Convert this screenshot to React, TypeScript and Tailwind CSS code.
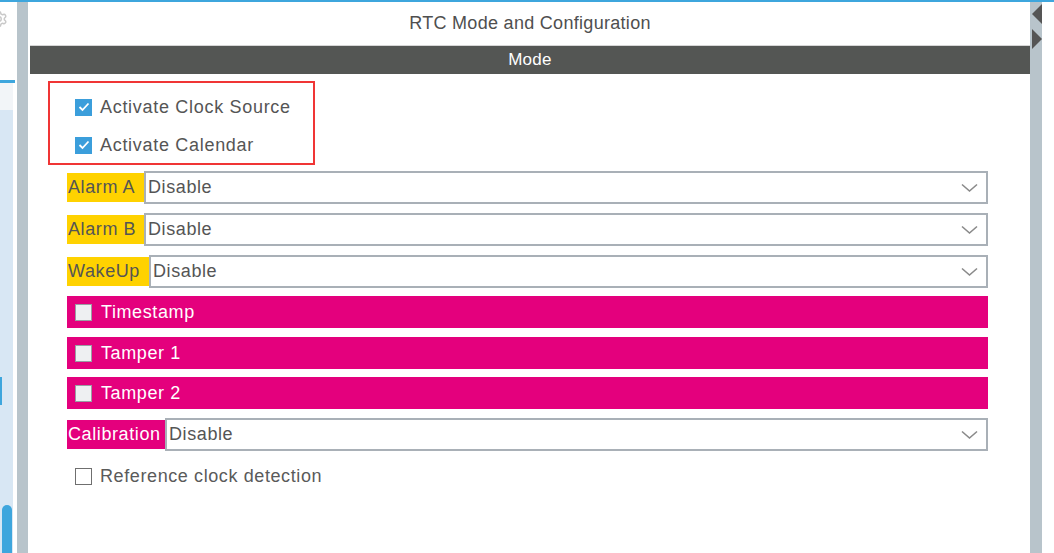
import React from "react";
import { Settings } from "lucide-react";

const font = { fontFamily: '"Liberation Sans", Arial, sans-serif' };

function Chevron() {
  return (
    <svg width="17" height="10" viewBox="0 0 17 10" className="mr-[8px] shrink-0">
      <polyline points="1,1.5 8.5,8 16,1.5" fill="none" stroke="#8a8a8a" strokeWidth="1.6" />
    </svg>
  );
}

function SelectRow({ label, labelW, bg, textColor, mt }: { label: string; labelW: string; bg: string; textColor: string; mt: string }) {
  return (
    <div className={`flex items-center h-[33px] ${mt}`}>
      <div className={`h-[29px] ${labelW} ${bg} ${textColor} pl-[1px] flex items-center text-[18px] tracking-[0.6px] shrink-0 whitespace-nowrap`}>
        {label}
      </div>
      <div className="flex-1 h-[33px] border-2 border-[#a9b0b7] bg-white flex items-center justify-between">
        <span className="pl-[2px] text-[18px] tracking-[0.6px] text-[#555]">Disable</span>
        <Chevron />
      </div>
    </div>
  );
}

function PinkRow({ label, mt }: { label: string; mt: string }) {
  return (
    <div className={`flex items-center h-[32px] bg-[#e4007d] pl-[8px] ${mt}`}>
      <div className="w-[17px] h-[17px] bg-[#eef0f2] border-[1.5px] border-[#9a9ea3] shrink-0" />
      <span className="ml-[9px] text-white text-[18px] tracking-[0.6px]">{label}</span>
    </div>
  );
}

function Checked() {
  return (
    <div className="w-[17px] h-[17px] bg-[#3b9edb] flex items-center justify-center shrink-0">
      <svg width="12" height="10" viewBox="0 0 12 10">
        <polyline points="1.5,5 4.5,8 10.5,1.5" fill="none" stroke="white" strokeWidth="1.8" />
      </svg>
    </div>
  );
}

export default function App() {
  return (
    <div className="w-[1054px] h-[553px] overflow-hidden bg-white flex flex-col" style={font}>
      <div className="h-[2px] bg-[#3ea6dd] shrink-0" />
      <div className="flex flex-1 min-h-0">
        {/* left strip */}
        <div className="w-[17px] flex flex-col shrink-0 overflow-hidden">
          <div className="h-[78px] bg-white overflow-hidden">
            <Settings size={18} color="#c9c9c9" strokeWidth={2} className="ml-[-10px] mt-[8px]" />
          </div>
          <div className="h-[3px] w-[15px] bg-[#3ea6dd]" />
          <div className="flex-1 w-[13px] flex flex-col">
            <div className="h-[27px] bg-[#f2f5f8]" />
            <div className="flex-1 bg-[#d8e7f4] flex flex-col">
              <div className="h-[267px]" />
              <div className="h-[28px] w-[2px] bg-[#3ea6dd]" />
              <div className="flex-1" />
              <div className="h-[48px] ml-[2px] w-[10px] rounded-t-[5px] bg-[#3ea6dd]" />
            </div>
          </div>
        </div>
        <div className="w-[11px] bg-[#b8c4cb] shrink-0" />
        <div className="w-[2px] bg-white shrink-0" />
        {/* main */}
        <div className="w-[1000px] flex flex-col shrink-0">
          <div className="h-[43px] flex items-center justify-center text-[18px] tracking-[0.3px] text-[#4f4f4f]">
            RTC Mode and Configuration
          </div>
          <div className="h-[1px] bg-[#d6d6d6]" />
          <div className="h-[28px] bg-[#545654] flex items-center justify-center text-white text-[17px] tracking-[0.3px]">
            Mode
          </div>
          <div className="ml-[18px] mt-[7px] w-[267px] h-[84px] border-2 border-[#f03535] flex flex-col pt-[4px] pl-[25px]">
            <div className="h-[40px] shrink-0 flex items-center">
              <Checked />
              <span className="ml-[8px] text-[18px] tracking-[0.7px] text-[#555]">Activate Clock Source</span>
            </div>
            <div className="h-[36px] shrink-0 flex items-center">
              <Checked />
              <span className="ml-[8px] text-[18px] tracking-[0.7px] text-[#555]">Activate Calendar</span>
            </div>
          </div>
          <div className="ml-[37px] w-[921px] flex flex-col">
            <SelectRow label="Alarm A" labelW="w-[77px]" bg="bg-[#ffd200]" textColor="text-[#555]" mt="mt-[6px]" />
            <SelectRow label="Alarm B" labelW="w-[77px]" bg="bg-[#ffd200]" textColor="text-[#555]" mt="mt-[9px]" />
            <SelectRow label="WakeUp" labelW="w-[82px]" bg="bg-[#ffd200]" textColor="text-[#555]" mt="mt-[9px]" />
            <PinkRow label="Timestamp" mt="mt-[8px]" />
            <PinkRow label="Tamper 1" mt="mt-[9px]" />
            <PinkRow label="Tamper 2" mt="mt-[8px]" />
            <SelectRow label="Calibration" labelW="w-[98px]" bg="bg-[#e4007d]" textColor="text-white" mt="mt-[9px]" />
            <div className="h-[18px] mt-[16px] flex items-center pl-[8px]">
              <div className="w-[17px] h-[17px] bg-white border-[1.5px] border-[#6f6f6f] shrink-0" />
              <span className="ml-[8px] text-[18px] tracking-[0.6px] text-[#5a5a5a]">Reference clock detection</span>
            </div>
          </div>
        </div>
        {/* right bar */}
        <div className="w-[12px] bg-[#b8c4cb] shrink-0">
          <svg width="12" height="50" viewBox="0 0 12 50">
            <polygon points="12,2 2,12 12,22" fill="#555" />
            <polygon points="2,27 12,37 2,47" fill="#555" />
          </svg>
        </div>
        <div className="flex-1 bg-white" />
      </div>
    </div>
  );
}
